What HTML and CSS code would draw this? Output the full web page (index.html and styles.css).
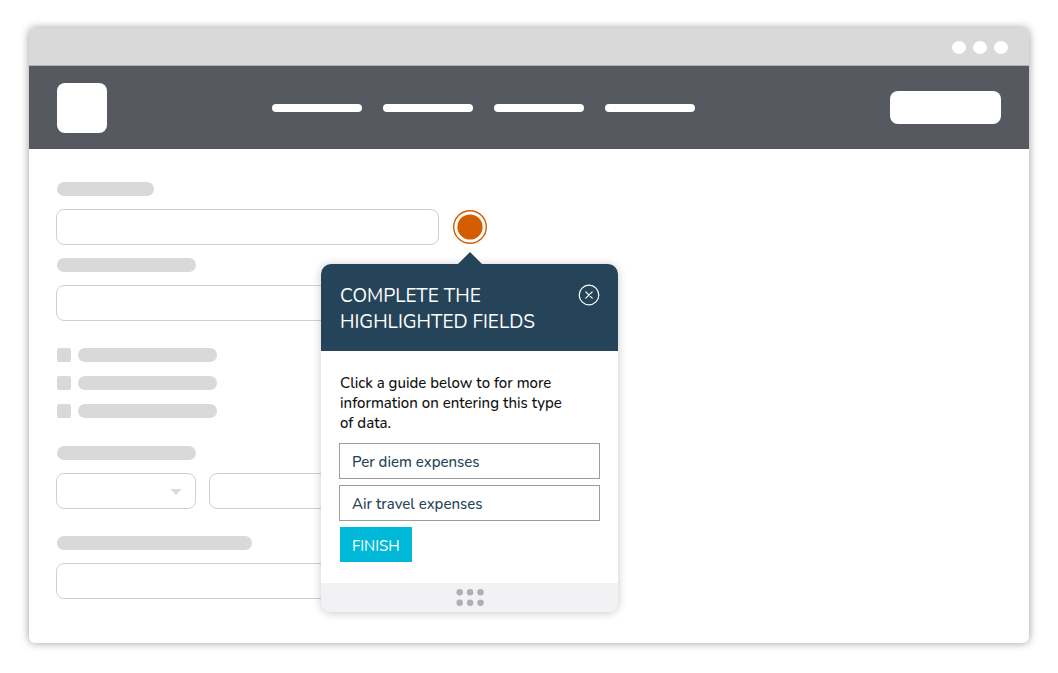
FILE: index.html
```html
<!DOCTYPE html>
<html lang="en">
<head>
  <meta charset="UTF-8">
  <meta name="viewport" content="width=device-width, initial-scale=1.0">
  <title>Complete the highlighted fields</title>
  <link rel="stylesheet" href="styles.css">
</head>
<body>
  <div class="window">
    <div class="title-bar">
      <span class="window-dot"></span>
      <span class="window-dot"></span>
      <span class="window-dot"></span>
    </div>

    <header class="site-header">
      <a href="#" class="logo" aria-label="Home"></a>
      <nav class="site-nav">
        <a href="#" class="nav-link" aria-label="Page 1"></a>
        <a href="#" class="nav-link" aria-label="Page 2"></a>
        <a href="#" class="nav-link" aria-label="Page 3"></a>
        <a href="#" class="nav-link" aria-label="Page 4"></a>
      </nav>
      <button type="button" class="header-button" aria-label="Account"></button>
    </header>

    <form class="form">
      <label class="label label-short" for="field-1" aria-label="Field 1"></label>
      <div class="field-row">
        <input type="text" class="field" id="field-1">
        <div class="marker">
          <svg width="34" height="34" viewBox="0 0 34 34">
            <circle cx="17" cy="17" r="16.3" fill="#fff" stroke="#d45d00" stroke-width="1.4"/>
            <circle cx="17" cy="17" r="12.6" fill="#d45d00"/>
          </svg>

          <section class="guide">
            <div class="guide-header">
              <h1>Complete the highlighted fields</h1>
              <button type="button" class="close-button" aria-label="Close">
                <svg width="22" height="22" viewBox="0 0 22 22" fill="none" stroke="#fff" stroke-width="1.2">
                  <circle cx="11" cy="11" r="9.8"/>
                  <path d="M7.8 7.8l6.4 6.4M14.2 7.8l-6.4 6.4" stroke-linecap="round"/>
                </svg>
              </button>
            </div>
            <div class="guide-body">
              <p>Click a guide below to for more information on entering this type of data.</p>
              <div class="guide-actions">
                <button type="button" class="guide-option">Per diem expenses</button>
                <button type="button" class="guide-option">Air travel expenses</button>
                <button type="button" class="finish-button">FINISH</button>
              </div>
            </div>
            <div class="guide-footer">
              <svg width="28" height="18" viewBox="0 0 28 18" fill="#afafb1">
                <circle cx="3.7" cy="3.3" r="3.2"/>
                <circle cx="14.1" cy="3.3" r="3.2"/>
                <circle cx="24.5" cy="3.3" r="3.2"/>
                <circle cx="3.7" cy="13.7" r="3.2"/>
                <circle cx="14.1" cy="13.7" r="3.2"/>
                <circle cx="24.5" cy="13.7" r="3.2"/>
              </svg>
            </div>
          </section>
        </div>
      </div>

      <label class="label" for="field-2" aria-label="Field 2"></label>
      <input type="text" class="field" id="field-2">

      <div class="checks">
        <div class="check-row">
          <input type="checkbox" class="check" id="check-1">
          <label class="label" for="check-1" aria-label="Option 1"></label>
        </div>
        <div class="check-row">
          <input type="checkbox" class="check" id="check-2">
          <label class="label" for="check-2" aria-label="Option 2"></label>
        </div>
        <div class="check-row">
          <input type="checkbox" class="check" id="check-3">
          <label class="label" for="check-3" aria-label="Option 3"></label>
        </div>
      </div>

      <label class="label" for="field-3" aria-label="Field 3"></label>
      <div class="split-row">
        <div class="select-wrap">
          <select class="field" id="field-3"></select>
          <svg class="select-arrow" width="12" height="6" viewBox="0 0 12 6">
            <path d="M0.5 0h11L6 6z" fill="#d9d9d9"/>
          </svg>
        </div>
        <input type="text" class="field" aria-label="Field 4">
      </div>

      <label class="label label-long" for="field-5" aria-label="Field 5"></label>
      <input type="text" class="field" id="field-5">
    </form>
  </div>
</body>
</html>
```
FILE: styles.css
```css
* {
  box-sizing: border-box;
}
body {
  margin: 0;
  padding: 28px 29px 30px;
  font-family: Nunito, Lato, sans-serif;
  background-color: #fff;
}
button,
input,
select {
  margin: 0;
  font-family: inherit;
}
button {
  cursor: pointer;
}
svg {
  display: block;
}

/* browser window */
.window {
  border-radius: 6px;
  background-color: #fff;
  box-shadow: 0 0 8px rgba(0, 0, 0, 0.4);
}
.title-bar {
  display: flex;
  align-items: center;
  justify-content: flex-end;
  gap: 7px;
  height: 38px;
  padding: 2px 21px 0;
  border-bottom: 1px solid #b0b1b4;
  border-radius: 6px 6px 0 0;
  background-color: #d9d9d9;
}
.window-dot {
  width: 14px;
  height: 13px;
  border-radius: 50%;
  background-color: #fff;
}
.site-header {
  display: flex;
  align-items: center;
  height: 83px;
  padding: 0 28px;
  background-color: #575961;
}
.logo {
  width: 50px;
  height: 50px;
  border-radius: 8px;
  background-color: #fff;
}
.site-nav {
  display: flex;
  flex: 1;
  gap: 21px;
  padding-left: 165px;
}
.nav-link {
  width: 90px;
  height: 8px;
  border-radius: 4px;
  background-color: #fff;
}
.header-button {
  width: 111px;
  height: 33px;
  border: none;
  border-radius: 8px;
  background-color: #fff;
}

/* form */
.form {
  display: flex;
  flex-direction: column;
  gap: 13px;
  padding: 33px 27px 44px;
}
.label {
  width: 139px;
  height: 14px;
  margin-left: 1px;
  border-radius: 7px;
  background-color: #d9d9d9;
}
.label-short {
  width: 97px;
}
.label-long {
  width: 195px;
}
.field {
  width: 383px;
  height: 36px;
  padding: 0 12px;
  border: 1px solid #d0d0d0;
  border-radius: 8px;
  background-color: #fff;
  font-size: 15px;
}
.field-row {
  display: flex;
  align-items: center;
  gap: 14px;
}
.checks {
  display: flex;
  flex-direction: column;
  gap: 14px;
  margin: 14px 0 15px 1px;
}
.check-row {
  display: flex;
  gap: 6px;
}
.check {
  appearance: none;
  width: 14px;
  height: 14px;
  border-radius: 2px;
  background-color: #d9d9d9;
}
.split-row {
  display: flex;
  gap: 13px;
  width: 383px;
  margin-bottom: 14px;
}
.split-row > .field {
  flex: 1;
  width: auto;
}
.select-wrap {
  position: relative;
}
.select-wrap .field {
  display: block;
  width: 140px;
  appearance: none;
}
.select-arrow {
  position: absolute;
  top: 16px;
  right: 14px;
  pointer-events: none;
}

/* guide popover */
.marker {
  position: relative;
}
.guide {
  position: absolute;
  top: 54px;
  left: -132px;
  z-index: 1;
  width: 297px;
  border-radius: 10px;
  background-color: #fff;
  box-shadow: 0 1px 10px rgba(0, 0, 0, 0.22);
}
.guide::before {
  content: "";
  position: absolute;
  top: -12px;
  left: 137px;
  border: 12px solid transparent;
  border-top: none;
  border-bottom-color: #254359;
}
.guide-header {
  display: flex;
  align-items: flex-start;
  justify-content: space-between;
  padding: 19px 18px 16px 19px;
  border-radius: 10px 10px 0 0;
  background-color: #254359;
}
.guide-header h1 {
  width: 220px;
  margin: 0;
  color: #fff;
  font-size: 19px;
  font-weight: 400;
  line-height: 26px;
  text-transform: uppercase;
}
.close-button {
  margin-top: 1px;
  padding: 0;
  border: none;
  background: none;
}
.guide-body {
  padding: 22px 18px 21px;
}
.guide-body p {
  max-width: 224px;
  margin: 0 0 10px 1px;
  color: #111;
  font-size: 15px;
  font-weight: 500;
  line-height: 20px;
}
.guide-actions {
  display: flex;
  flex-direction: column;
  align-items: flex-start;
  gap: 6px;
}
.guide-option {
  width: 100%;
  height: 36px;
  padding: 2px 12px 0;
  border: 1px solid #9d9da0;
  background-color: #fff;
  color: #254359;
  font-size: 15px;
  font-weight: 500;
  text-align: left;
}
.finish-button {
  height: 35px;
  margin-left: 1px;
  padding: 2px 12px 0;
  border: none;
  background-color: #00b9d8;
  color: #fff;
  font-size: 15px;
}
.guide-footer {
  display: flex;
  align-items: center;
  justify-content: center;
  height: 29px;
  border-radius: 0 0 10px 10px;
  background-color: #f2f2f5;
}
```
